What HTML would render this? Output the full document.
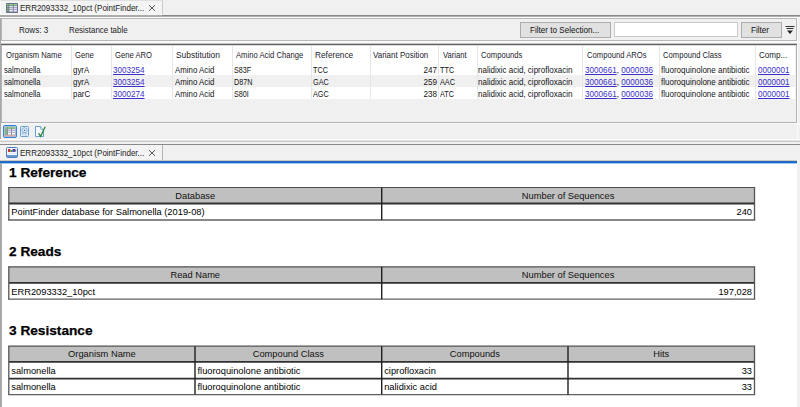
<!DOCTYPE html>
<html><head><meta charset="utf-8"><style>
html,body{margin:0;padding:0;width:800px;height:407px;overflow:hidden;background:#f0f0f0;position:relative;font-family:"Liberation Sans", sans-serif}
.t{position:absolute;white-space:nowrap;font-family:"Liberation Sans", sans-serif}
</style></head><body>
<div style="position:absolute;left:0px;top:0px;width:800px;height:18px;background:#f0f0f0"></div>
<div style="position:absolute;left:0px;top:0px;width:163px;height:14px;background:#f4f4f4;border-top:1px solid #e0e0e0;border-left:1px solid #fafafa;border-right:1px solid #c8c8c8;box-sizing:border-box"></div>
<div style="position:absolute;left:0px;top:14px;width:162px;height:1px;background:#f8f8f8"></div>
<div style="position:absolute;left:0px;top:15px;width:162px;height:2px;background:#ababab"></div>
<div style="position:absolute;left:162px;top:15px;width:638px;height:1px;background:#888"></div>
<div style="position:absolute;left:162px;top:16px;width:638px;height:1px;background:#b0b0b0"></div>
<div style="position:absolute;left:0px;top:17px;width:800px;height:1px;background:#fbfbfb"></div>
<svg style="position:absolute;left:6px;top:3px" width="12" height="10" viewBox="0 0 12 10"><rect x="0" y="0" width="12" height="10" rx="1" fill="#6c7290"/><rect x="1" y="1" width="1.6" height="1.5" fill="#86d070"/><rect x="3.4" y="1" width="3.4" height="1.5" fill="#8ed67c"/><rect x="7.6" y="1" width="3.4" height="1.5" fill="#8ed67c"/><rect x="1" y="3" width="1.6" height="1.5" fill="#78c068"/><rect x="3.4" y="3" width="3.4" height="1.5" fill="#e4e2f2"/><rect x="7.6" y="3" width="3.4" height="1.5" fill="#e4e2f2"/><rect x="1" y="5" width="1.6" height="1.5" fill="#78c068"/><rect x="3.4" y="5" width="3.4" height="1.5" fill="#dcdaee"/><rect x="7.6" y="5" width="3.4" height="1.5" fill="#dcdaee"/><rect x="1" y="7" width="1.6" height="1.5" fill="#78c068"/><rect x="3.4" y="7" width="3.4" height="1.5" fill="#f4f4fa"/><rect x="7.6" y="7" width="3.4" height="1.5" fill="#f4f4fa"/></svg>
<div class="t" style="left:20px;top:4.38px;font-size:9.0px;line-height:9.0px;transform:scaleX(0.89);transform-origin:0 0;color:#1a1a1a">ERR2093332_10pct (PointFinder...</div>
<svg style="position:absolute;left:148px;top:4px" width="8" height="8" viewBox="0 0 8 8"><path d="M1 1.2L7 6.8M7 1.2L1 6.8" stroke="#5a5a5a" stroke-width="1"/></svg>
<div style="position:absolute;left:1px;top:18px;width:796px;height:23px;background:#f0f0f0;border:1px solid #b8b8b8;box-sizing:border-box"></div>
<div class="t" style="left:19px;top:25.58px;font-size:9.0px;line-height:9.0px;transform:scaleX(0.9);transform-origin:0 0;color:#1c1c1c">Rows: 3</div>
<div class="t" style="left:69px;top:25.58px;font-size:9.0px;line-height:9.0px;transform:scaleX(0.88);transform-origin:0 0;color:#1c1c1c">Resistance table</div>
<div style="position:absolute;left:520px;top:22px;width:91px;height:16px;background:#e1e1e1;border:1px solid #adadad;box-sizing:border-box"></div>
<div class="t" style="left:530px;top:25.58px;font-size:9.0px;line-height:9.0px;transform:scaleX(0.9);transform-origin:0 0;color:#111">Filter to Selection...</div>
<div style="position:absolute;left:614px;top:22px;width:124px;height:15px;background:#fff;border:1px solid #c8c8c8;box-sizing:border-box"></div>
<div style="position:absolute;left:741px;top:22px;width:41px;height:16px;background:#e1e1e1;border:1px solid #adadad;box-sizing:border-box"></div>
<div class="t" style="left:751px;top:25.58px;font-size:9.0px;line-height:9.0px;transform:scaleX(0.9);transform-origin:0 0;color:#111">Filter</div>
<svg style="position:absolute;left:785px;top:26px" width="10" height="9" viewBox="0 0 10 9"><path d="M0.5 0.5H9.5M1.5 2.5H8.5" stroke="#333" stroke-width="1"/><path d="M2 4.5H8L5 8Z" fill="#222"/></svg>
<div style="position:absolute;left:0px;top:41px;width:800px;height:2px;background:#f8f8f8"></div>
<div style="position:absolute;left:1px;top:43px;width:796px;height:80px;background:#f0f0f0;border:1px solid #b0b4b8;border-top:none;box-sizing:border-box"></div>
<div style="position:absolute;left:1px;top:43px;width:796px;height:1px;background:#c8c8c8"></div>
<div style="position:absolute;left:1px;top:44px;width:796px;height:1px;background:#606064"></div>
<div style="position:absolute;left:2px;top:45px;width:794px;height:1px;background:#dcdce0"></div>
<div style="position:absolute;left:0px;top:123px;width:800px;height:1px;background:#fafafa"></div>
<div style="position:absolute;left:2px;top:46px;width:793px;height:17px;background:#fff"></div>
<div style="position:absolute;left:2px;top:63px;width:793px;height:12px;background:#fff"></div>
<div style="position:absolute;left:2px;top:75px;width:793px;height:12px;background:#f0f0f0"></div>
<div style="position:absolute;left:2px;top:87px;width:793px;height:12px;background:#fff"></div>
<div style="position:absolute;left:71px;top:46px;width:1px;height:53px;background:#e6e6e6"></div>
<div style="position:absolute;left:111px;top:46px;width:1px;height:53px;background:#e6e6e6"></div>
<div style="position:absolute;left:172px;top:46px;width:1px;height:53px;background:#e6e6e6"></div>
<div style="position:absolute;left:232px;top:46px;width:1px;height:53px;background:#e6e6e6"></div>
<div style="position:absolute;left:311px;top:46px;width:1px;height:53px;background:#e6e6e6"></div>
<div style="position:absolute;left:370px;top:46px;width:1px;height:53px;background:#e6e6e6"></div>
<div style="position:absolute;left:438px;top:46px;width:1px;height:53px;background:#e6e6e6"></div>
<div style="position:absolute;left:477px;top:46px;width:1px;height:53px;background:#e6e6e6"></div>
<div style="position:absolute;left:582px;top:46px;width:1px;height:53px;background:#e6e6e6"></div>
<div style="position:absolute;left:659px;top:46px;width:1px;height:53px;background:#e6e6e6"></div>
<div style="position:absolute;left:755px;top:46px;width:1px;height:53px;background:#e6e6e6"></div>
<div class="t" style="left:5.5px;top:51.38px;font-size:9.0px;line-height:9.0px;transform:scaleX(0.85);transform-origin:0 0;color:#1c1c2c">Organism Name</div>
<div class="t" style="left:74.5px;top:51.38px;font-size:9.0px;line-height:9.0px;transform:scaleX(0.85);transform-origin:0 0;color:#1c1c2c">Gene</div>
<div class="t" style="left:114.5px;top:51.38px;font-size:9.0px;line-height:9.0px;transform:scaleX(0.85);transform-origin:0 0;color:#1c1c2c">Gene ARO</div>
<div class="t" style="left:176px;top:51.38px;font-size:9.0px;line-height:9.0px;transform:scaleX(0.935);transform-origin:0 0;color:#1c1c2c">Substitution</div>
<div class="t" style="left:235.75px;top:51.38px;font-size:9.0px;line-height:9.0px;transform:scaleX(0.85);transform-origin:0 0;color:#1c1c2c">Amino Acid Change</div>
<div class="t" style="left:315px;top:51.38px;font-size:9.0px;line-height:9.0px;transform:scaleX(0.92);transform-origin:0 0;color:#1c1c2c">Reference</div>
<div class="t" style="left:373.25px;top:51.38px;font-size:9.0px;line-height:9.0px;transform:scaleX(0.886);transform-origin:0 0;color:#1c1c2c">Variant Position</div>
<div class="t" style="left:442.5px;top:51.38px;font-size:9.0px;line-height:9.0px;transform:scaleX(0.85);transform-origin:0 0;color:#1c1c2c">Variant</div>
<div class="t" style="left:480.75px;top:51.38px;font-size:9.0px;line-height:9.0px;transform:scaleX(0.85);transform-origin:0 0;color:#1c1c2c">Compounds</div>
<div class="t" style="left:587px;top:51.38px;font-size:9.0px;line-height:9.0px;transform:scaleX(0.85);transform-origin:0 0;color:#1c1c2c">Compound AROs</div>
<div class="t" style="left:662.5px;top:51.38px;font-size:9.0px;line-height:9.0px;transform:scaleX(0.85);transform-origin:0 0;color:#1c1c2c">Compound Class</div>
<div class="t" style="left:758.75px;top:51.38px;font-size:9.0px;line-height:9.0px;transform:scaleX(0.9);transform-origin:0 0;color:#1c1c2c">Comp...</div>
<div class="t" style="left:3.5px;top:66.08px;font-size:9.0px;line-height:9.0px;transform:scaleX(0.85);transform-origin:0 0;color:#141414">salmonella</div>
<div class="t" style="left:72.5px;top:66.08px;font-size:9.0px;line-height:9.0px;transform:scaleX(0.875);transform-origin:0 0;color:#141414">gyrA</div>
<div class="t" style="left:113px;top:66.08px;font-size:9.0px;line-height:9.0px;transform:scaleX(0.9);transform-origin:0 0;color:#3b30c8;text-decoration:underline">3003254</div>
<div class="t" style="left:174.7px;top:66.08px;font-size:9.0px;line-height:9.0px;transform:scaleX(0.875);transform-origin:0 0;color:#141414">Amino Acid</div>
<div class="t" style="left:233.75px;top:66.08px;font-size:9.0px;line-height:9.0px;transform:scaleX(0.8);transform-origin:0 0;color:#141414">S83F</div>
<div class="t" style="left:313px;top:66.08px;font-size:9.0px;line-height:9.0px;transform:scaleX(0.81);transform-origin:0 0;color:#141414">TCC</div>
<div class="t" style="right:363px;top:66.08px;font-size:9.0px;line-height:9.0px;transform:scaleX(0.9);transform-origin:100% 0;color:#141414">247</div>
<div class="t" style="left:440px;top:66.08px;font-size:9.0px;line-height:9.0px;transform:scaleX(0.81);transform-origin:0 0;color:#141414">TTC</div>
<div class="t" style="left:478.25px;top:66.08px;font-size:9.0px;line-height:9.0px;transform:scaleX(0.89);transform-origin:0 0;color:#141414">nalidixic acid, ciprofloxacin</div>
<div class="t" style="left:585px;top:66.08px;font-size:9.0px;line-height:9.0px;color:#141414;transform:scaleX(0.905);transform-origin:0 0"><span style="color:#3b30c8;text-decoration:underline">3000661</span>, <span style="color:#3b30c8;text-decoration:underline">0000036</span></div>
<div class="t" style="left:661.25px;top:66.08px;font-size:9.0px;line-height:9.0px;transform:scaleX(0.89);transform-origin:0 0;color:#141414">fluoroquinolone antibiotic</div>
<div class="t" style="left:757.5px;top:66.08px;font-size:9.0px;line-height:9.0px;transform:scaleX(0.9);transform-origin:0 0;color:#3b30c8;text-decoration:underline">0000001</div>
<div class="t" style="left:3.5px;top:78.08px;font-size:9.0px;line-height:9.0px;transform:scaleX(0.85);transform-origin:0 0;color:#141414">salmonella</div>
<div class="t" style="left:72.5px;top:78.08px;font-size:9.0px;line-height:9.0px;transform:scaleX(0.875);transform-origin:0 0;color:#141414">gyrA</div>
<div class="t" style="left:113px;top:78.08px;font-size:9.0px;line-height:9.0px;transform:scaleX(0.9);transform-origin:0 0;color:#3b30c8;text-decoration:underline">3003254</div>
<div class="t" style="left:174.7px;top:78.08px;font-size:9.0px;line-height:9.0px;transform:scaleX(0.875);transform-origin:0 0;color:#141414">Amino Acid</div>
<div class="t" style="left:233.75px;top:78.08px;font-size:9.0px;line-height:9.0px;transform:scaleX(0.8);transform-origin:0 0;color:#141414">D87N</div>
<div class="t" style="left:313px;top:78.08px;font-size:9.0px;line-height:9.0px;transform:scaleX(0.81);transform-origin:0 0;color:#141414">GAC</div>
<div class="t" style="right:363px;top:78.08px;font-size:9.0px;line-height:9.0px;transform:scaleX(0.9);transform-origin:100% 0;color:#141414">259</div>
<div class="t" style="left:440px;top:78.08px;font-size:9.0px;line-height:9.0px;transform:scaleX(0.81);transform-origin:0 0;color:#141414">AAC</div>
<div class="t" style="left:478.25px;top:78.08px;font-size:9.0px;line-height:9.0px;transform:scaleX(0.89);transform-origin:0 0;color:#141414">nalidixic acid, ciprofloxacin</div>
<div class="t" style="left:585px;top:78.08px;font-size:9.0px;line-height:9.0px;color:#141414;transform:scaleX(0.905);transform-origin:0 0"><span style="color:#3b30c8;text-decoration:underline">3000661</span>, <span style="color:#3b30c8;text-decoration:underline">0000036</span></div>
<div class="t" style="left:661.25px;top:78.08px;font-size:9.0px;line-height:9.0px;transform:scaleX(0.89);transform-origin:0 0;color:#141414">fluoroquinolone antibiotic</div>
<div class="t" style="left:757.5px;top:78.08px;font-size:9.0px;line-height:9.0px;transform:scaleX(0.9);transform-origin:0 0;color:#3b30c8;text-decoration:underline">0000001</div>
<div class="t" style="left:3.5px;top:90.08px;font-size:9.0px;line-height:9.0px;transform:scaleX(0.85);transform-origin:0 0;color:#141414">salmonella</div>
<div class="t" style="left:72.5px;top:90.08px;font-size:9.0px;line-height:9.0px;transform:scaleX(0.875);transform-origin:0 0;color:#141414">parC</div>
<div class="t" style="left:113px;top:90.08px;font-size:9.0px;line-height:9.0px;transform:scaleX(0.9);transform-origin:0 0;color:#3b30c8;text-decoration:underline">3000274</div>
<div class="t" style="left:174.7px;top:90.08px;font-size:9.0px;line-height:9.0px;transform:scaleX(0.875);transform-origin:0 0;color:#141414">Amino Acid</div>
<div class="t" style="left:233.75px;top:90.08px;font-size:9.0px;line-height:9.0px;transform:scaleX(0.8);transform-origin:0 0;color:#141414">S80I</div>
<div class="t" style="left:313px;top:90.08px;font-size:9.0px;line-height:9.0px;transform:scaleX(0.81);transform-origin:0 0;color:#141414">AGC</div>
<div class="t" style="right:363px;top:90.08px;font-size:9.0px;line-height:9.0px;transform:scaleX(0.9);transform-origin:100% 0;color:#141414">238</div>
<div class="t" style="left:440px;top:90.08px;font-size:9.0px;line-height:9.0px;transform:scaleX(0.81);transform-origin:0 0;color:#141414">ATC</div>
<div class="t" style="left:478.25px;top:90.08px;font-size:9.0px;line-height:9.0px;transform:scaleX(0.89);transform-origin:0 0;color:#141414">nalidixic acid, ciprofloxacin</div>
<div class="t" style="left:585px;top:90.08px;font-size:9.0px;line-height:9.0px;color:#141414;transform:scaleX(0.905);transform-origin:0 0"><span style="color:#3b30c8;text-decoration:underline">3000661</span>, <span style="color:#3b30c8;text-decoration:underline">0000036</span></div>
<div class="t" style="left:661.25px;top:90.08px;font-size:9.0px;line-height:9.0px;transform:scaleX(0.89);transform-origin:0 0;color:#141414">fluoroquinolone antibiotic</div>
<div class="t" style="left:757.5px;top:90.08px;font-size:9.0px;line-height:9.0px;transform:scaleX(0.9);transform-origin:0 0;color:#3b30c8;text-decoration:underline">0000001</div>
<div style="position:absolute;left:0px;top:124px;width:800px;height:15px;background:#f0f0f0"></div>
<div style="position:absolute;left:797px;top:18px;width:1px;height:122px;background:#fafafa"></div>
<div style="position:absolute;left:0px;top:18px;width:1px;height:122px;background:#a8a8a8"></div>
<svg style="position:absolute;left:3px;top:125px" width="14" height="13" viewBox="0 0 14 13"><rect x="0" y="0" width="14" height="13" rx="1.5" fill="#cfe3f8"/><rect x="0.5" y="0.5" width="13" height="12" rx="1.5" fill="none" stroke="#3584e4"/><rect x="1.5" y="1.5" width="11" height="10" fill="#8a90a8"/><rect x="2" y="2" width="2" height="1.6" fill="#8fd67a"/><rect x="5" y="2" width="3" height="1.6" fill="#8fd67a"/><rect x="9" y="2" width="3" height="1.6" fill="#8fd67a"/><rect x="2" y="4" width="2" height="1.6" fill="#7cc070"/><rect x="5" y="4" width="3" height="1.6" fill="#d8d4ee"/><rect x="9" y="4" width="3" height="1.6" fill="#d8d4ee"/><rect x="2" y="6" width="2" height="1.6" fill="#7cc070"/><rect x="5" y="6" width="3" height="1.6" fill="#e6e2f4"/><rect x="9" y="6" width="3" height="1.6" fill="#e6e2f4"/><rect x="2" y="8" width="2" height="1.6" fill="#7cc070"/><rect x="5" y="8" width="3" height="1.6" fill="#ffffff"/><rect x="9" y="8" width="3" height="1.6" fill="#ffffff"/><rect x="2" y="10" width="10" height="1.4" fill="#d8aaa0"/></svg>
<svg style="position:absolute;left:20px;top:126px" width="9" height="11" viewBox="0 0 9 11"><rect x="0.5" y="0.5" width="8" height="10" rx="0.8" fill="#eaf2fa" stroke="#6c9fd2"/><circle cx="4.5" cy="4.3" r="2.6" fill="none" stroke="#7aa6d4" stroke-width="0.9"/><circle cx="4.5" cy="4.3" r="0.9" fill="#4a7ab0"/><path d="M1.8 7.6Q4.5 5.8 7.2 7.6" fill="none" stroke="#7aa6d4" stroke-width="0.8"/><line x1="2" y1="9" x2="7" y2="9" stroke="#8ab4dc" stroke-width="0.8" stroke-dasharray="1 0.5"/></svg>
<svg style="position:absolute;left:34px;top:125px" width="12" height="13" viewBox="0 0 12 13"><path d="M1.5 1.5H6.5L9.5 4.5V11.5H1.5Z" fill="#f6f9fd" stroke="#6c9fd2"/><path d="M6.5 1.5V3.5Q6.5 4.5 7.5 4.5H9.5" fill="#dbe8f6" stroke="#6c9fd2" stroke-width="0.8"/><path d="M4.6 8.2L6.6 11.4L11.2 1.8" fill="none" stroke="#2a8c3c" stroke-width="1.3"/></svg>
<div style="position:absolute;left:0px;top:139px;width:800px;height:1px;background:#fbfbfb"></div>
<div style="position:absolute;left:0px;top:140px;width:800px;height:1px;background:#e4e4e4"></div>
<div style="position:absolute;left:0px;top:141px;width:800px;height:1px;background:#cacaca"></div>
<div style="position:absolute;left:0px;top:142px;width:800px;height:19px;background:#f0f0f0"></div>
<div style="position:absolute;left:0px;top:144px;width:800px;height:1px;background:#8a8a8a"></div>
<div style="position:absolute;left:0px;top:145px;width:163px;height:15px;background:#f3f3f3;border-right:1px solid #b4b4b4;box-sizing:border-box"></div>
<svg style="position:absolute;left:6px;top:147px" width="12" height="11" viewBox="0 0 12 11"><rect x="0.5" y="0.5" width="11" height="10" rx="1" fill="#f4f8fc" stroke="#4a7cc0"/><rect x="2" y="2" width="2.5" height="3" fill="#d03434"/><rect x="4.5" y="3" width="2" height="2" fill="#3aa040"/><rect x="6.5" y="2" width="2.5" height="3" fill="#3c50c8"/><rect x="9" y="2.5" width="1.2" height="2" fill="#c04040"/><rect x="1" y="8" width="10" height="2" fill="#6a98d0"/><rect x="2" y="6" width="8" height="1" fill="#dce8f4"/></svg>
<div class="t" style="left:20px;top:149.18px;font-size:9.0px;line-height:9.0px;transform:scaleX(0.89);transform-origin:0 0;color:#1a1a1a">ERR2093332_10pct (PointFinder...</div>
<svg style="position:absolute;left:148px;top:149px" width="8" height="8" viewBox="0 0 8 8"><path d="M1 1.2L7 6.8M7 1.2L1 6.8" stroke="#5a5a5a" stroke-width="1"/></svg>
<div style="position:absolute;left:0px;top:160px;width:797px;height:1px;background:#cfc8c0"></div>
<div style="position:absolute;left:0px;top:161px;width:797px;height:1px;background:#2a6cc0"></div>
<div style="position:absolute;left:0px;top:162px;width:797px;height:1px;background:#0a68d0"></div>
<div style="position:absolute;left:0px;top:163px;width:797px;height:1px;background:#a8ccf0"></div>
<div style="position:absolute;left:0px;top:164px;width:800px;height:243px;background:#fff"></div>
<div style="position:absolute;left:0px;top:163px;width:2px;height:244px;background:#a8a8a8"></div>
<div style="position:absolute;left:797px;top:163px;width:3px;height:244px;background:#f0f0f0"></div>
<svg style="position:absolute;left:0;top:0" width="800" height="407"><rect x="8.8" y="187.5" width="745.7" height="16.0" fill="#c0c0c0"/><line x1="8.100000000000001" y1="187.5" x2="755.2" y2="187.5" stroke="#505050" stroke-width="1.2"/><line x1="8.8" y1="203.5" x2="754.5" y2="203.5" stroke="#303030" stroke-width="1.8"/><line x1="8.100000000000001" y1="220.0" x2="755.2" y2="220.0" stroke="#606060" stroke-width="1.3"/><line x1="8.8" y1="187.5" x2="8.8" y2="220.0" stroke="#555" stroke-width="1.3"/><line x1="754.5" y1="187.5" x2="754.5" y2="220.0" stroke="#555" stroke-width="1.3"/><line x1="381.7" y1="187.5" x2="381.7" y2="220.0" stroke="#202020" stroke-width="1.4"/><rect x="8.8" y="266.85" width="745.7" height="16.049999999999955" fill="#c0c0c0"/><line x1="8.100000000000001" y1="266.85" x2="755.2" y2="266.85" stroke="#505050" stroke-width="1.2"/><line x1="8.8" y1="282.9" x2="754.5" y2="282.9" stroke="#303030" stroke-width="1.8"/><line x1="8.100000000000001" y1="299.2" x2="755.2" y2="299.2" stroke="#606060" stroke-width="1.3"/><line x1="8.8" y1="266.85" x2="8.8" y2="299.2" stroke="#555" stroke-width="1.3"/><line x1="754.5" y1="266.85" x2="754.5" y2="299.2" stroke="#555" stroke-width="1.3"/><line x1="381.7" y1="266.85" x2="381.7" y2="299.2" stroke="#202020" stroke-width="1.4"/><rect x="8.8" y="346.2" width="745.7" height="15.600000000000023" fill="#c0c0c0"/><line x1="8.100000000000001" y1="346.2" x2="755.2" y2="346.2" stroke="#505050" stroke-width="1.2"/><line x1="8.8" y1="361.8" x2="754.5" y2="361.8" stroke="#303030" stroke-width="1.8"/><line x1="8.8" y1="378.6" x2="754.5" y2="378.6" stroke="#303030" stroke-width="1.6"/><line x1="8.100000000000001" y1="394.6" x2="755.2" y2="394.6" stroke="#606060" stroke-width="1.3"/><line x1="8.8" y1="346.2" x2="8.8" y2="394.6" stroke="#555" stroke-width="1.3"/><line x1="754.5" y1="346.2" x2="754.5" y2="394.6" stroke="#555" stroke-width="1.3"/><line x1="195" y1="346.2" x2="195" y2="394.6" stroke="#202020" stroke-width="1.4"/><line x1="381.7" y1="346.2" x2="381.7" y2="394.6" stroke="#202020" stroke-width="1.4"/><line x1="568" y1="346.2" x2="568" y2="394.6" stroke="#202020" stroke-width="1.4"/></svg>
<div class="t" style="left:9px;top:165.86px;font-size:13.4px;line-height:13.4px;transform:scaleX(1.02);transform-origin:0 0;font-weight:bold;color:#000;-webkit-text-stroke:0.25px #000">1 Reference</div>
<div class="t" style="left:9px;top:245.06px;font-size:13.4px;line-height:13.4px;transform:scaleX(1.02);transform-origin:0 0;font-weight:bold;color:#000;-webkit-text-stroke:0.25px #000">2 Reads</div>
<div class="t" style="left:9px;top:324.06px;font-size:13.4px;line-height:13.4px;transform:scaleX(1.02);transform-origin:0 0;font-weight:bold;color:#000;-webkit-text-stroke:0.25px #000">3 Resistance</div>
<div class="t" style="left:-4.75px;width:400px;text-align:center;top:191.53px;font-size:9.3px;line-height:9.3px;color:#111">Database</div>
<div class="t" style="left:368.1px;width:400px;text-align:center;top:191.53px;font-size:9.3px;line-height:9.3px;color:#111">Number of Sequences</div>
<div class="t" style="left:11.3px;top:208.33px;font-size:9.3px;line-height:9.3px;color:#000">PointFinder database for Salmonella (2019-08)</div>
<div class="t" style="right:48.0px;top:208.33px;font-size:9.3px;line-height:9.3px;color:#000">240</div>
<div class="t" style="left:-4.75px;width:400px;text-align:center;top:270.93px;font-size:9.3px;line-height:9.3px;color:#111">Read Name</div>
<div class="t" style="left:368.1px;width:400px;text-align:center;top:270.93px;font-size:9.3px;line-height:9.3px;color:#111">Number of Sequences</div>
<div class="t" style="left:11.3px;top:287.53px;font-size:9.3px;line-height:9.3px;color:#000">ERR2093332_10pct</div>
<div class="t" style="right:48.0px;top:287.53px;font-size:9.3px;line-height:9.3px;color:#000">197,028</div>
<div class="t" style="left:-98.1px;width:400px;text-align:center;top:349.83px;font-size:9.3px;line-height:9.3px;color:#111">Organism Name</div>
<div class="t" style="left:88.35000000000002px;width:400px;text-align:center;top:349.83px;font-size:9.3px;line-height:9.3px;color:#111">Compound Class</div>
<div class="t" style="left:274.85px;width:400px;text-align:center;top:349.83px;font-size:9.3px;line-height:9.3px;color:#111">Compounds</div>
<div class="t" style="left:461.25px;width:400px;text-align:center;top:349.83px;font-size:9.3px;line-height:9.3px;color:#111">Hits</div>
<div class="t" style="left:11.3px;top:366.93px;font-size:9.3px;line-height:9.3px;color:#000">salmonella</div>
<div class="t" style="left:197.5px;top:366.93px;font-size:9.3px;line-height:9.3px;color:#000">fluoroquinolone antibiotic</div>
<div class="t" style="left:384.2px;top:366.93px;font-size:9.3px;line-height:9.3px;color:#000">ciprofloxacin</div>
<div class="t" style="right:48.0px;top:366.93px;font-size:9.3px;line-height:9.3px;color:#000">33</div>
<div class="t" style="left:11.3px;top:382.93px;font-size:9.3px;line-height:9.3px;color:#000">salmonella</div>
<div class="t" style="left:197.5px;top:382.93px;font-size:9.3px;line-height:9.3px;color:#000">fluoroquinolone antibiotic</div>
<div class="t" style="left:384.2px;top:382.93px;font-size:9.3px;line-height:9.3px;color:#000">nalidixic acid</div>
<div class="t" style="right:48.0px;top:382.93px;font-size:9.3px;line-height:9.3px;color:#000">33</div>
</body></html>
